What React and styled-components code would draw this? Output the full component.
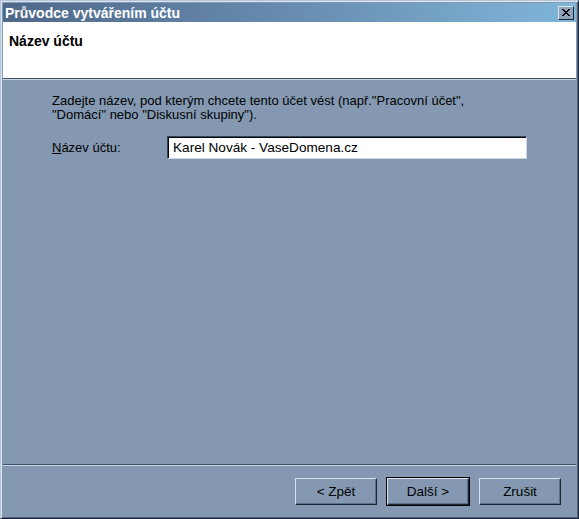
import React from "react";
import styled, { createGlobalStyle } from "styled-components";

const GlobalStyle = createGlobalStyle`
  html, body {
    margin: 0;
    padding: 0;
    background: #8499b1;
  }
`;

const Window = styled.div`
  width: 579px;
  height: 519px;
  box-sizing: border-box;
  display: flex;
  flex-direction: column;
  background: #8499b1;
  border-top: 1px solid #b4c6da;
  border-left: 1px solid #b4c6da;
  border-right: 1px solid #1a2636;
  border-bottom: 1px solid #1a2636;
  box-shadow: inset 1px 1px 0 #dbe6f0, inset -1px -1px 0 #4d6280;
  padding: 2px;
  font-family: "Liberation Sans", Arial, sans-serif;
  font-size: 13px;
  color: #000;
`;

const TitleBar = styled.div`
  height: 19px;
  display: flex;
  align-items: center;
  justify-content: space-between;
  padding: 0 2px 0 2px;
  background: linear-gradient(to right, #4e6888 0%, #6a90b4 55%, #80b6d8 100%);
  color: #fff;
  font-weight: bold;
  font-size: 14px;
  flex-shrink: 0;
`;

const CloseButton = styled.div`
  width: 16px;
  height: 14px;
  box-sizing: border-box;
  background: #8ea2ba;
  border-top: 1px solid #dde7f1;
  border-left: 1px solid #dde7f1;
  border-right: 1px solid #1a2636;
  border-bottom: 1px solid #1a2636;
  display: flex;
  align-items: center;
  justify-content: center;
`;

const Header = styled.div`
  height: 56px;
  background: #fff;
  padding: 11px 0 0 6px;
  box-sizing: border-box;
  font-weight: bold;
  font-size: 14px;
  flex-shrink: 0;
`;

const Rule = styled.div`
  height: 0;
  border-top: 1px solid #3e5066;
  border-bottom: 1px solid #c9d6e4;
  flex-shrink: 0;
`;

const Body = styled.div`
  flex: 1;
  padding: 14px 0 0 49px;
  display: flex;
  flex-direction: column;
  gap: 14px;
`;

const Text = styled.p`
  margin: 0;
  line-height: 14px;
`;

const FieldRow = styled.div`
  display: flex;
  align-items: center;
`;

const Label = styled.label`
  width: 115px;
  u {
    text-decoration: underline;
  }
`;

const Input = styled.div`
  width: 360px;
  height: 23px;
  box-sizing: border-box;
  background: #fff;
  border-top: 1px solid #33455c;
  border-left: 1px solid #33455c;
  border-right: 1px solid #c9d6e4;
  border-bottom: 1px solid #c9d6e4;
  box-shadow: inset 1px 1px 0 #000;
  padding: 3px 0 0 5px;
  font-size: 13.6px;
  white-space: nowrap;
`;

const Footer = styled.div`
  height: 50px;
  display: flex;
  justify-content: flex-end;
  align-items: flex-start;
  gap: 10px;
  padding: 12px 15px 0 0;
  box-sizing: border-box;
  flex-shrink: 0;
`;

const Button = styled.div`
  width: 82px;
  height: 27px;
  box-sizing: border-box;
  display: flex;
  align-items: center;
  justify-content: center;
  background: #8499b1;
  font-size: 13.5px;
  border-top: 1px solid #d6e2ee;
  border-left: 1px solid #d6e2ee;
  border-right: 1px solid #1a2636;
  border-bottom: 1px solid #1a2636;
  box-shadow: inset -1px -1px 0 #5a6f8a;
  outline: ${(p) => (p.$default ? "1px solid #000" : "none")};
`;

export default function App() {
  return (
    <>
      <GlobalStyle />
      <Window>
        <TitleBar>
          <span>Průvodce vytvářením účtu</span>
          <CloseButton>
            <svg width="10" height="9" viewBox="0 0 10 9">
              <path d="M1 1 L8 8 M2 1 L9 8 M8 1 L1 8 M9 1 L2 8" stroke="#000" strokeWidth="1" />
            </svg>
          </CloseButton>
        </TitleBar>
        <Header>Název účtu</Header>
        <Rule />
        <Body>
          <Text>
            Zadejte název, pod kterým chcete tento účet vést (např."Pracovní účet",
            <br />
            "Domácí" nebo "Diskusní skupiny").
          </Text>
          <FieldRow>
            <Label>
              <u>N</u>ázev účtu:
            </Label>
            <Input>Karel Novák - VaseDomena.cz</Input>
          </FieldRow>
        </Body>
        <Rule />
        <Footer>
          <Button>&lt; Zpět</Button>
          <Button $default>Další &gt;</Button>
          <Button>Zrušit</Button>
        </Footer>
      </Window>
    </>
  );
}
